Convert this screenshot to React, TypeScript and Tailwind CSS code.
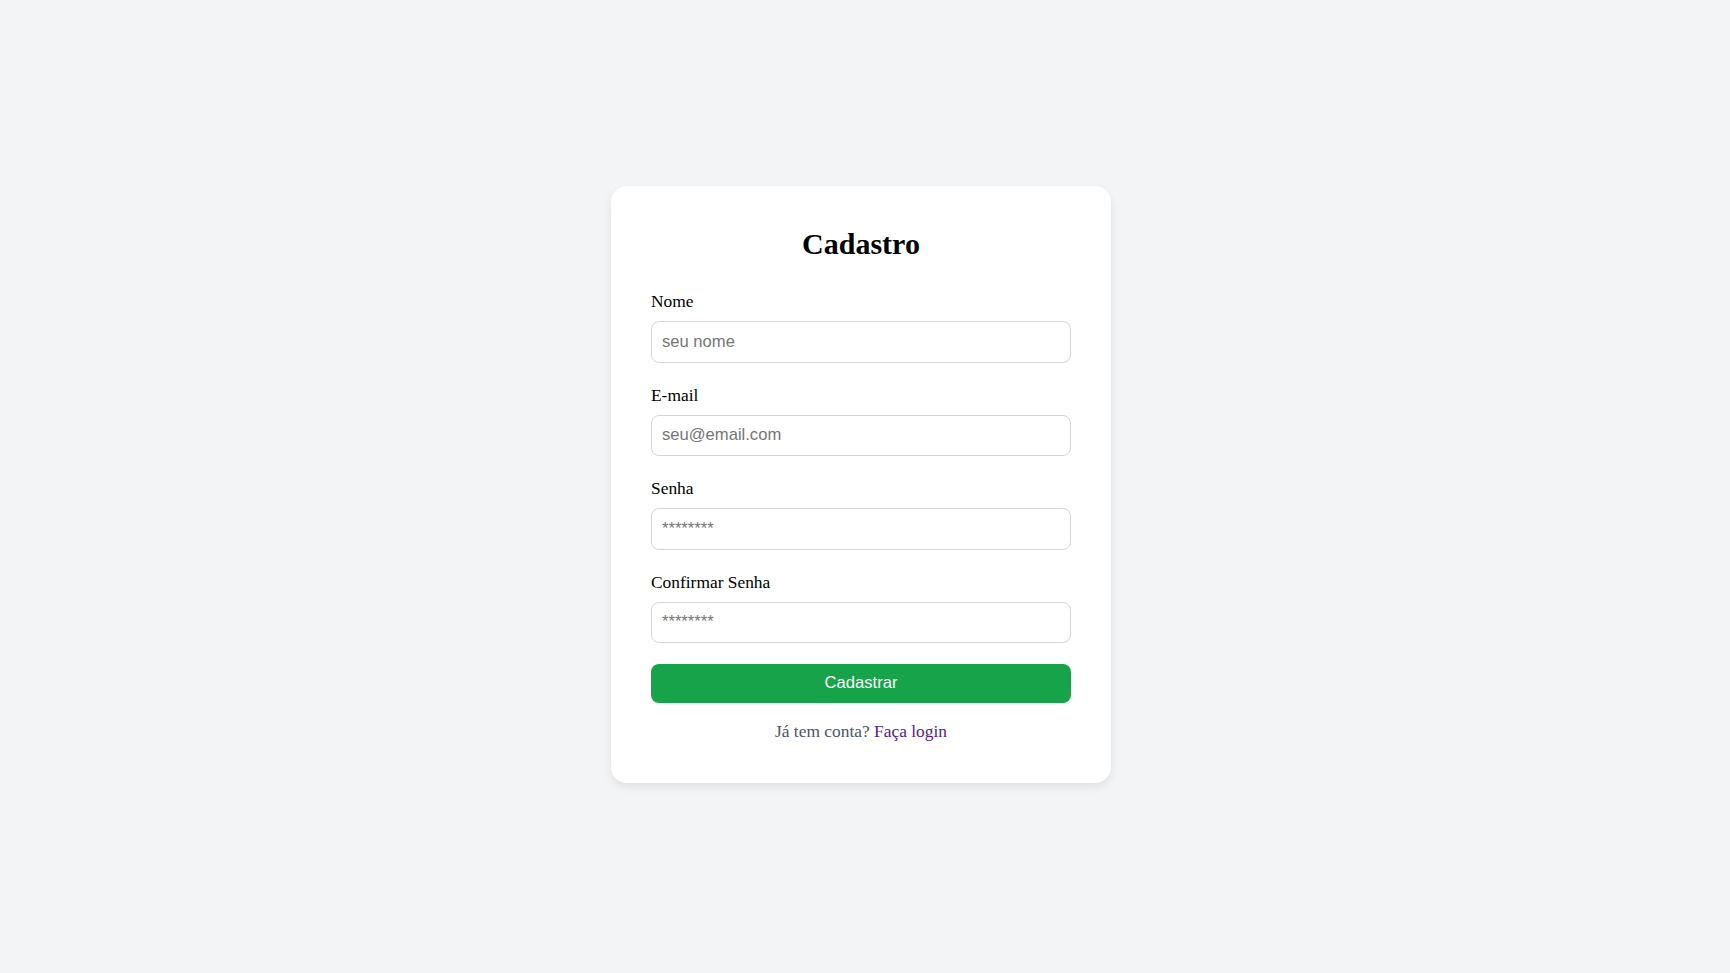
import React from "react";

function Field({ label, type, placeholder }: { label: string; type: string; placeholder: string }) {
  return (
    <div>
      <label className="block mb-2 text-[17.4px] leading-6 text-black">{label}</label>
      <input
        type={type}
        placeholder={placeholder}
        className="block w-full h-[41.5px] px-[10px] rounded-lg border border-[#d1d5db] bg-white text-[16.6px] leading-6 text-black placeholder:text-[#757575] outline-none"
        style={{ fontFamily: '"Liberation Sans", Arial, sans-serif' }}
      />
    </div>
  );
}

export default function App() {
  return (
    <div
      className="min-h-screen w-full bg-[#f3f4f6] flex items-center justify-center pr-2 pb-1"
      style={{ fontFamily: '"Liberation Serif", "Times New Roman", serif' }}
    >
      <div className="w-[500px] bg-white rounded-2xl shadow-[0_4px_10px_rgba(0,0,0,0.08)] p-10">
        <h1 className="text-[30px] leading-[36px] font-bold text-center text-black mb-[27px]">Cadastro</h1>
        <form className="flex flex-col gap-5" onSubmit={(e) => e.preventDefault()}>
          <Field label="Nome" type="text" placeholder="seu nome" />
          <Field label="E-mail" type="email" placeholder="seu@email.com" />
          <Field label="Senha" type="password" placeholder="********" />
          <Field label="Confirmar Senha" type="password" placeholder="********" />
          <button
            type="submit"
            className="w-full h-[39.5px] mt-[0.5px] rounded-lg bg-[#16a34a] text-white text-[16.6px] leading-6"
            style={{ fontFamily: '"Liberation Sans", Arial, sans-serif' }}
          >
            Cadastrar
          </button>
        </form>
        <p className="mt-4 text-center text-[17.4px] leading-6 text-[#4b5563]">
          Já tem conta? <a href="#" className="text-[#551a8b]">Faça login</a>
        </p>
      </div>
    </div>
  );
}
